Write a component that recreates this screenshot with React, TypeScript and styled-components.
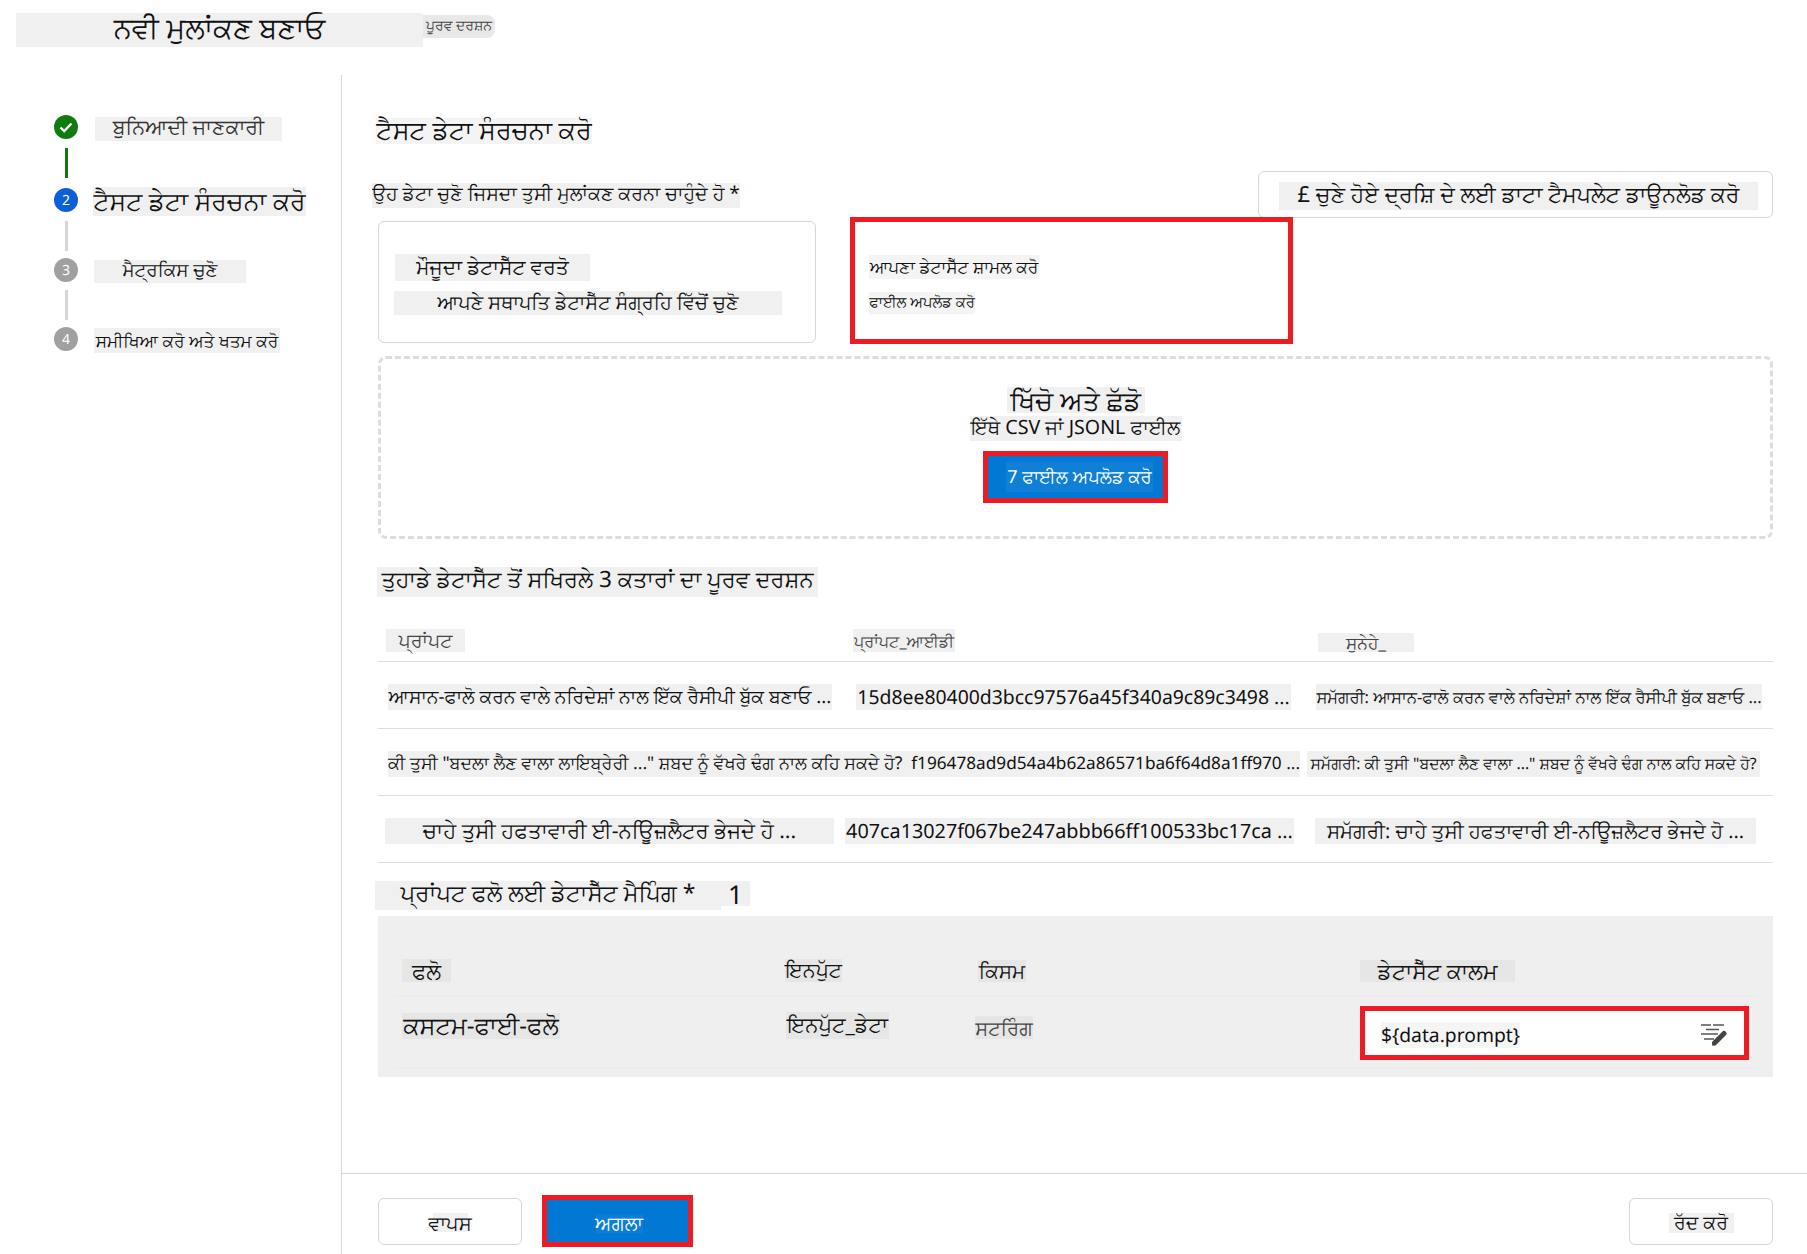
import React from 'react';
import styled, {createGlobalStyle} from 'styled-components';

const GlobalStyle = createGlobalStyle`
  html, body {
    margin: 0;
    padding: 0;
    background: #FFFFFF;
  }
  body {
    font-family: "Noto Sans", "Open Sans", "Liberation Sans", sans-serif;
    color: #111111;
    text-rendering: geometricPrecision;
  }
  * {
    box-sizing: border-box;
  }
`;

type BandProps = {
  $w: number;
  $h: number;
  $fs: number;
  $ml?: number;
  $mt?: number;
  $pb?: number;
  $bg?: string;
  $color?: string;
  $justify?: string;
  $front?: boolean;
};

// translated text sits on a pale patch in the screenshot
const Band = styled.span<BandProps>`
  display: flex;
  flex: none;
  align-items: center;
  justify-content: ${p => p.$justify || 'center'};
  width: ${p => p.$w}px;
  height: ${p => p.$h}px;
  margin-left: ${p => p.$ml || 0}px;
  margin-top: ${p => p.$mt || 0}px;
  padding-bottom: ${p => p.$pb || 0}px;
  background: ${p => p.$bg || '#F0F0F0'};
  color: ${p => p.$color || '#111111'};
  font-size: ${p => p.$fs}px;
  line-height: 1;
  white-space: nowrap;
  overflow: visible;
  position: ${p => (p.$front ? 'relative' : 'static')};
  z-index: ${p => (p.$front ? 1 : 'auto')};
`;

const Page = styled.div`
  width: 1807px;
  height: 1254px;
  display: flex;
  flex-direction: column;
  overflow: hidden;
`;
const TopBar = styled.header`
  height: 75px;
  flex: none;
  display: flex;
  align-items: flex-start;
  padding: 13px 0 0 16px;
`;
const PreviewChip = styled(Band)`
  border-radius: 0 8px 8px 0;
  margin-top: 2px;
`;
const Body = styled.div`
  flex: 1;
  min-height: 0;
  display: flex;
`;
const Sidebar = styled.nav`
  width: 342px;
  flex: none;
  border-right: 1px solid #D6D6D6;
  padding: 40px 0 0 54px;
`;
const Step = styled.div`
  height: 24px;
  display: flex;
  align-items: center;
`;
const StepCircle = styled.div<{$bg: string}>`
  width: 24px;
  height: 24px;
  flex: none;
  border-radius: 50%;
  background: ${p => p.$bg};
  color: white;
  font-size: 14px;
  display: flex;
  align-items: center;
  justify-content: center;
`;
const Connector = styled.div<{$done?: boolean; $before: number; $after: number}>`
  width: 3px;
  height: 30px;
  margin: ${p => p.$before}px 0 ${p => p.$after}px 10.5px;
  background: ${p => (p.$done ? '#107C10' : '#D6D6D6')};
`;
const Main = styled.main`
  flex: 1;
  min-width: 0;
  display: flex;
  flex-direction: column;
`;
const Content = styled.div`
  flex: 1;
  min-height: 0;
  padding: 43px 34px 0 36px;
`;
const ChoiceHead = styled.div`
  margin-top: 27px;
  display: flex;
  justify-content: space-between;
`;
const TemplateButton = styled.div`
  width: 515px;
  height: 47px;
  border: 1px solid #D6D6D6;
  border-radius: 6px;
  padding: 10px 0 0 20px;
`;
const ChoiceRow = styled.div`
  margin-top: -1px;
  display: flex;
  align-items: flex-start;
  gap: 34px;
`;
const ChoiceCard = styled.div`
  width: 438px;
  height: 122px;
  margin-top: 4px;
  border: 1px solid #D6D6D6;
  border-radius: 6px;
  padding: 32px 0 0 16px;
  display: flex;
  flex-direction: column;
  gap: 10px;
`;
const SelectedCard = styled.div`
  width: 443px;
  height: 127px;
  border: 5px solid #ED1C24;
  padding: 33px 0 0 14px;
  display: flex;
  flex-direction: column;
  gap: 13px;
`;
const DropZone = styled.div`
  margin-top: 12px;
  height: 183px;
  border: 3px dashed #DDDDDD;
  border-radius: 8px;
  display: flex;
  flex-direction: column;
  align-items: center;
  padding-top: 28px;
`;
const UploadButton = styled.div`
  margin-top: 10px;
  width: 185px;
  height: 52px;
  border: 5px solid #ED1C24;
  background: #0078D4;
  display: flex;
  align-items: center;
  justify-content: center;
`;
const Section = styled.div<{$top: number}>`
  margin-top: ${p => p.$top}px;
  display: flex;
`;
const PreviewHeadRow = styled.div`
  height: 65px;
  border-bottom: 1px solid #DDDDDD;
  display: grid;
  grid-template-columns: 466px 456px 1fr;
  align-items: end;
  padding-bottom: 9px;
`;
const PreviewRow = styled.div`
  height: 67px;
  border-bottom: 1px solid #DDDDDD;
  display: grid;
  grid-template-columns: 466px 456px 1fr;
  align-items: center;
  padding-top: 4px;
`;
const MappingPanel = styled.div`
  margin-top: 6px;
  height: 161px;
  background: #EFEFEF;
  padding: 0 15px;
`;
const MappingHeadRow = styled.div`
  height: 81px;
  border-bottom: 1px solid #EAEAEA;
  display: grid;
  grid-template-columns: 392px 190px 385px 1fr;
  align-items: end;
  padding-bottom: 14px;
`;
const MappingRow = styled.div`
  height: 72px;
  border-bottom: 1px solid #EAEAEA;
  display: grid;
  grid-template-columns: 392px 190px 385px 1fr;
  align-items: center;
`;
const ColumnInput = styled.div`
  width: 389px;
  height: 54px;
  border: 5px solid #ED1C24;
  background: #FFFFFF;
  display: flex;
  align-items: center;
  padding: 4px 17px 0 16px;
  justify-content: space-between;
`;
const Footer = styled.footer`
  height: 81px;
  flex: none;
  border-top: 1px solid #D6D6D6;
  padding: 21px 34px 0 36px;
  display: flex;
  align-items: flex-start;
`;
const FooterButton = styled.div`
  width: 144px;
  height: 47px;
  margin-top: 3px;
  border: 1px solid #D6D6D6;
  border-radius: 6px;
  display: flex;
  align-items: center;
  justify-content: center;
`;
const NextButton = styled.div`
  margin-left: 20px;
  width: 151px;
  height: 52px;
  border: 5px solid #ED1C24;
  background: #0078D4;
  display: flex;
  align-items: center;
  justify-content: center;
`;
const Spacer = styled.div`
  flex: 1;
`;

const CheckIcon = () => (
  <svg width="16" height="16" viewBox="0 0 16 16" fill="none">
    <path d="M2.5 8.5 L6.2 12 L13.5 4.5" stroke="white" strokeWidth="2.4" />
  </svg>
);

const PencilLinesIcon = () => (
  <svg width="26" height="24" viewBox="0 0 26 24" fill="none">
    <path d="M0 2H10 M12 2H23 M5 6.5H18 M0 11H17 M3 16H13" stroke="#555" strokeWidth="1.3" />
    <path d="M13.5 20 L23 10.5" stroke="#444" strokeWidth="5" strokeLinecap="round" />
    <path d="M11 23 L12 18 L15 21 Z" fill="#444" />
  </svg>
);

const previewRows = [
  [
    {w: 444, ml: 10, fs: 18.7, text: 'ਆਸਾਨ-ਫਾਲੋ ਕਰਨ ਵਾਲੇ ਨਰਿਦੇਸ਼ਾਂ ਨਾਲ ਇੱਕ ਰੈਸੀਪੀ ਬੁੱਕ ਬਣਾਓ ...'},
    {w: 435, ml: 12, fs: 19.4, text: '15d8ee80400d3bcc97576a45f340a9c89c3498 ...'},
    {w: 446, ml: 16, fs: 16.4, text: 'ਸਮੱਗਰੀ: ਆਸਾਨ-ਫਾਲੋ ਕਰਨ ਵਾਲੇ ਨਰਿਦੇਸ਼ਾਂ ਨਾਲ ਇੱਕ ਰੈਸੀਪੀ ਬੁੱਕ ਬਣਾਓ ...'},
  ],
  [
    {w: 456, ml: 10, fs: 17.5, justify: 'flex-start', front: true, text: 'ਕੀ ਤੁਸੀ "ਬਦਲਾ ਲੈਣ ਵਾਲਾ ਲਾਇਬ੍ਰੇਰੀ ..." ਸ਼ਬਦ ਨੂੰ ਵੱਖਰੇ ਢੰਗ ਨਾਲ ਕਹਿ ਸਕਦੇ ਹੋ?'},
    {w: 456, ml: 0, fs: 17.2, justify: 'flex-end', text: 'f196478ad9d54a4b62a86571ba6f64d8a1ff970 ...'},
    {w: 453, ml: 7, fs: 15.6, text: 'ਸਮੱਗਰੀ: ਕੀ ਤੁਸੀ "ਬਦਲਾ ਲੈਣ ਵਾਲਾ ..." ਸ਼ਬਦ ਨੂੰ ਵੱਖਰੇ ਢੰਗ ਨਾਲ ਕਹਿ ਸਕਦੇ ਹੋ?'},
  ],
  [
    {w: 449, ml: 7, fs: 21.2, text: 'ਚਾਹੇ ਤੁਸੀ ਹਫਤਾਵਾਰੀ ਈ-ਨਊਿਜ਼ਲੈਟਰ ਭੇਜਦੇ ਹੋ ...'},
    {w: 449, ml: 1, fs: 19.8, text: '407ca13027f067be247abbb66ff100533bc17ca ...'},
    {w: 441, ml: 15, fs: 19.8, text: 'ਸਮੱਗਰੀ: ਚਾਹੇ ਤੁਸੀ ਹਫਤਾਵਾਰੀ ਈ-ਨਊਿਜ਼ਲੈਟਰ ਭੇਜਦੇ ਹੋ ...'},
  ],
];

const App: React.FC = () => {
  return (
    <Page>
      <GlobalStyle />
      <TopBar>
        <Band $w={407} $h={34} $fs={29} $pb={6}>ਨਵੀ ਮੁਲਾਂਕਣ ਬਣਾਓ</Band>
        <PreviewChip $w={72} $h={23} $fs={14} $bg="#E8E8E8" $color="#444" $pb={2}>ਪੂਰਵ ਦਰਸ਼ਨ</PreviewChip>
      </TopBar>
      <Body>
        <Sidebar>
          <Step>
            <StepCircle $bg="#107C10"><CheckIcon /></StepCircle>
            <Band $w={187} $h={24} $fs={20.6} $ml={17} $mt={4} $pb={4} $color="#333">ਬੁਨਿਆਦੀ ਜਾਣਕਾਰੀ</Band>
          </Step>
          <Connector $done $before={9} $after={10} />
          <Step>
            <StepCircle $bg="#0B5FD9">2</StepCircle>
            <Band $w={213} $h={29} $fs={25} $ml={15} $mt={3}>ਟੈਸਟ ਡੇਟਾ ਸੰਰਚਨਾ ਕਰੋ</Band>
          </Step>
          <Connector $before={9} $after={7} />
          <Step>
            <StepCircle $bg="#A0A0A0">3</StepCircle>
            <Band $w={152} $h={23} $fs={18.4} $ml={16} $mt={3} $pb={2}>ਮੈਟ੍ਰਕਿਸ ਚੁਣੋ</Band>
          </Step>
          <Connector $before={8} $after={7} />
          <Step>
            <StepCircle $bg="#A0A0A0">4</StepCircle>
            <Band $w={186} $h={25} $fs={17} $ml={16} $mt={3}>ਸਮੀਖਿਆ ਕਰੋ ਅਤੇ ਖਤਮ ਕਰੋ</Band>
          </Step>
        </Sidebar>
        <Main>
          <Content>
            <Band $w={216} $h={26} $fs={25.4} $ml={-2} $bg="#F4F4F4">ਟੈਸਟ ਡੇਟਾ ਸੰਰਚਨਾ ਕਰੋ</Band>
            <ChoiceHead>
              <Band $w={368} $h={25} $fs={19} $ml={-6} $mt={12} $pb={4}>ਉਹ ਡੇਟਾ ਚੁਣੋ ਜਿਸਦਾ ਤੁਸੀ ਮੁਲਾਂਕਣ ਕਰਨਾ ਚਾਹੁੰਦੇ ਹੋ *</Band>
              <TemplateButton>
                <Band $w={479} $h={28} $fs={22} $pb={4}>£ ਚੁਣੇ ਹੋਏ ਦ੍ਰਸ਼ਿ ਦੇ ਲਈ ਡਾਟਾ ਟੈਮਪਲੇਟ ਡਾਊਨਲੋਡ ਕਰੋ</Band>
              </TemplateButton>
            </ChoiceHead>
            <ChoiceRow>
              <ChoiceCard>
                <Band $w={195} $h={27} $fs={20.2} $pb={2}>ਮੌਜੂਦਾ ਡੇਟਾਸੈੱਟ ਵਰਤੋ</Band>
                <Band $w={388} $h={24} $fs={19.3} $ml={-1} $pb={2}>ਆਪਣੇ ਸਥਾਪਤਿ ਡੇਟਾਸੈੱਟ ਸੰਗ੍ਰਹਿ ਵਿੱਚੋਂ ਚੁਣੋ</Band>
              </ChoiceCard>
              <SelectedCard>
                <Band $w={170} $h={24} $fs={17} $bg="#F4F4F4" $pb={2}>ਆਪਣਾ ਡੇਟਾਸੈੱਟ ਸ਼ਾਮਲ ਕਰੋ</Band>
                <Band $w={106} $h={22} $fs={14.7} $bg="#F4F4F4" $pb={2}>ਫਾਈਲ ਅਪਲੋਡ ਕਰੋ</Band>
              </SelectedCard>
            </ChoiceRow>
            <DropZone>
              <Band $w={138} $h={26} $fs={26.4}>ਖਿੱਚੋ ਅਤੇ ਛੱਡੋ</Band>
              <Band $w={212} $h={25} $fs={19.6} $mt={3} $pb={3}>ਇੱਥੇ CSV ਜਾਂ JSONL ਫਾਈਲ</Band>
              <UploadButton>
                <Band $w={147} $h={30} $fs={18} $ml={8} $bg="#0F80D6" $color="white">7 ਫਾਈਲ ਅਪਲੋਡ ਕਰੋ</Band>
              </UploadButton>
            </DropZone>
            <Section $top={28}>
              <Band $w={441} $h={30} $fs={22.5} $ml={-1} $pb={6}>ਤੁਹਾਡੇ ਡੇਟਾਸੈੱਟ ਤੋਂ ਸਖਿਰਲੇ 3 ਕਤਾਰਾਂ ਦਾ ਪੂਰਵ ਦਰਸ਼ਨ</Band>
            </Section>
            <PreviewHeadRow>
              <Band $w={79} $h={23} $fs={19} $ml={8} $color="#444">ਪ੍ਰਾਂਪਟ</Band>
              <Band $w={102} $h={23} $fs={16} $ml={9} $color="#444">ਪ੍ਰਾਂਪਟ_ਆਈਡੀ</Band>
              <Band $w={96} $h={19} $fs={17} $ml={18} $color="#444">ਸੁਨੇਹੇ_</Band>
            </PreviewHeadRow>
            {previewRows.map((row, i) => (
              <PreviewRow key={i}>
                {row.map(cell => (
                  <Band
                    key={cell.text}
                    $w={cell.w}
                    $h={26}
                    $fs={cell.fs}
                    $ml={cell.ml}
                    $justify={cell.justify}
                    $front={cell.front}
                  >
                    {cell.text}
                  </Band>
                ))}
              </PreviewRow>
            ))}
            <Section $top={18}>
              <Band $w={346} $h={29} $fs={23} $ml={-3} $pb={6}>ਪ੍ਰਾਂਪਟ ਫਲੋ ਲਈ ਡੇਟਾਸੈੱਟ ਮੈਪਿੰਗ *</Band>
              <Band $w={29} $h={25} $fs={26}>1</Band>
            </Section>
            <MappingPanel>
              <MappingHeadRow>
                <Band $w={49} $h={23} $fs={22} $ml={9} $bg="#E6E6E6">ਫਲੋ</Band>
                <Band $w={57} $h={23} $fs={20.5} $bg="#E6E6E6">ਇਨਪੁੱਟ</Band>
                <Band $w={48} $h={22} $fs={20} $ml={3} $bg="#E6E6E6">ਕਿਸਮ</Band>
                <Band $w={155} $h={22} $fs={22} $bg="#E6E6E6">ਡੇਟਾਸੈੱਟ ਕਾਲਮ</Band>
              </MappingHeadRow>
              <MappingRow>
                <Band $w={158} $h={26} $fs={24} $ml={9} $mt={-14} $bg="#E6E6E6">ਕਸਟਮ-ਫਾਈ-ਫਲੋ</Band>
                <Band $w={103} $h={27} $fs={21} $ml={1} $mt={-14} $bg="#E6E6E6">ਇਨਪੁੱਟ_ਡੇਟਾ</Band>
                <Band $w={58} $h={23} $fs={19.5} $mt={-10} $bg="#E6E6E6" $color="#444">ਸਟਰਿੰਗ</Band>
                <ColumnInput>
                  <Band $w={139} $h={26} $fs={19.3} $bg="#F5F5F5">{'${data.prompt}'}</Band>
                  <PencilLinesIcon />
                </ColumnInput>
              </MappingRow>
            </MappingPanel>
          </Content>
          <Footer>
            <FooterButton>
              <Band $w={35} $h={19} $fs={19.5} $mt={2}>ਵਾਪਸ</Band>
            </FooterButton>
            <NextButton>
              <Band $w={47} $h={19} $fs={19} $ml={3} $mt={4} $bg="#0C7ED6" $color="white">ਅਗਲਾ</Band>
            </NextButton>
            <Spacer />
            <FooterButton>
              <Band $w={65} $h={20} $fs={19} $mt={2}>ਰੱਦ ਕਰੋ</Band>
            </FooterButton>
          </Footer>
        </Main>
      </Body>
    </Page>
  );
};
export default App;
